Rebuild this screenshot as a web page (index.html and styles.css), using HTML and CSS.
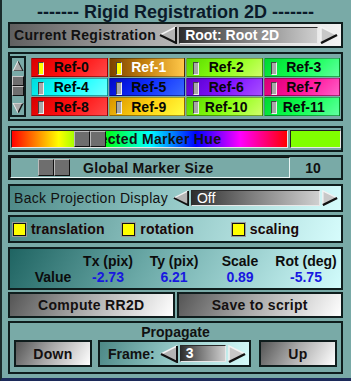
FILE: index.html
```html
<!DOCTYPE html>
<html lang="en">
<head>
    <meta charset="UTF-8">
    <title>Rigid Registration 2D</title>
    <link rel="stylesheet" href="styles.css">
</head>
<body>
<div class="window">
    <div class="title">------- Rigid Registration 2D -------</div>

    <div class="panel chooser current">
        <span class="chooser-label">Current Registration</span>
        <svg class="arrow" width="18" height="18" viewBox="0 0 18 18">
            <polygon points="17,1 1,9 17,17" fill="#b4b4b4"/>
            <polyline points="1,9 17,1" stroke="#f2f2f2" stroke-width="1.5" fill="none"/>
            <polyline points="1,9 17,17 17,1" stroke="#111" stroke-width="2" fill="none"/>
        </svg>
        <div class="field bold">Root: Root 2D</div>
        <svg class="arrow" width="18" height="18" viewBox="0 0 18 18">
            <polygon points="1,1 17,9 1,17" fill="#c8c8c8"/>
            <polyline points="1,17 1,1 17,9" stroke="#f2f2f2" stroke-width="1.5" fill="none"/>
            <polyline points="17,9 1,17" stroke="#111" stroke-width="2.5" fill="none"/>
        </svg>
    </div>

    <div class="panel markers">
        <div class="scrollbar">
            <svg width="12" height="10" viewBox="0 0 12 10">
                <polygon points="6,0 11,10 1,10" fill="#aaa"/>
                <polyline points="6,0 11,10 1,10" stroke="#111" stroke-width="1" fill="none"/>
                <polyline points="1,10 6,0" stroke="#eee" stroke-width="1" fill="none"/>
            </svg>
            <div class="sb-thumb"><span></span><span></span></div>
            <svg class="sb-down" width="12" height="10" viewBox="0 0 12 10">
                <polygon points="1,0 11,0 6,10" fill="#aaa"/>
                <polyline points="11,0 6,10" stroke="#111" stroke-width="1.5" fill="none"/>
                <polyline points="6,10 1,0 11,0" stroke="#eee" stroke-width="1" fill="none"/>
            </svg>
        </div>
        <div class="ref-grid">
            <div class="ref r0"><i class="flag on"></i>Ref-0</div>
            <div class="ref r1 picked"><i class="flag on"></i>Ref-1</div>
            <div class="ref r2"><i class="flag"></i>Ref-2</div>
            <div class="ref r3"><i class="flag"></i>Ref-3</div>
            <div class="ref r4"><i class="flag"></i>Ref-4</div>
            <div class="ref r5"><i class="flag"></i>Ref-5</div>
            <div class="ref r6"><i class="flag"></i>Ref-6</div>
            <div class="ref r7"><i class="flag"></i>Ref-7</div>
            <div class="ref r8"><i class="flag"></i>Ref-8</div>
            <div class="ref r9"><i class="flag"></i>Ref-9</div>
            <div class="ref r10"><i class="flag"></i>Ref-10</div>
            <div class="ref r11"><i class="flag"></i>Ref-11</div>
        </div>
    </div>

    <div class="panel hue-panel">
        <div class="hue-bar">
            <span class="hue-text">Selected Marker Hue</span>
            <div class="knob hue-knob"><span></span><span></span></div>
        </div>
        <div class="swatch"></div>
    </div>

    <div class="panel size-panel">
        <div class="size-track">
            <div class="knob"><span></span><span></span></div>
            <span class="size-label">Global Marker Size</span>
        </div>
        <div class="size-value">10</div>
    </div>

    <div class="panel chooser backproj shaded">
        <span class="chooser-label light">Back Projection Display</span>
        <svg class="arrow" width="16" height="16" viewBox="0 0 18 18">
            <polygon points="17,1 1,9 17,17" fill="#b4b4b4"/>
            <polyline points="1,9 17,1" stroke="#f2f2f2" stroke-width="1.5" fill="none"/>
            <polyline points="1,9 17,17 17,1" stroke="#111" stroke-width="2" fill="none"/>
        </svg>
        <div class="field">Off</div>
        <svg class="arrow" width="16" height="16" viewBox="0 0 18 18">
            <polygon points="1,1 17,9 1,17" fill="#c8c8c8"/>
            <polyline points="1,17 1,1 17,9" stroke="#f2f2f2" stroke-width="1.5" fill="none"/>
            <polyline points="17,9 1,17" stroke="#111" stroke-width="2.5" fill="none"/>
        </svg>
    </div>

    <div class="panel checks shaded">
        <label class="check"><i class="box"></i>translation</label>
        <label class="check"><i class="box"></i>rotation</label>
        <label class="check"><i class="box"></i>scaling</label>
    </div>

    <div class="panel values shaded">
        <span></span>
        <span>Tx (pix)</span>
        <span>Ty (pix)</span>
        <span>Scale</span>
        <span>Rot (deg)</span>
        <span>Value</span>
        <span class="num">-2.73</span>
        <span class="num">6.21</span>
        <span class="num">0.89</span>
        <span class="num">-5.75</span>
    </div>

    <div class="actions">
        <button class="btn">Compute RR2D</button>
        <button class="btn">Save to script</button>
    </div>

    <div class="panel propagate">
        <div class="prop-title">Propagate</div>
        <div class="prop-row">
            <button class="btn small">Down</button>
            <div class="frame shaded">
                <span class="frame-label">Frame:</span>
                <svg class="arrow" width="18" height="18" viewBox="0 0 18 18">
                    <polygon points="17,1 1,9 17,17" fill="#b4b4b4"/>
                    <polyline points="1,9 17,1" stroke="#f2f2f2" stroke-width="1.5" fill="none"/>
                    <polyline points="1,9 17,17 17,1" stroke="#111" stroke-width="2" fill="none"/>
                </svg>
                <div class="field bold frame-field">3</div>
                <svg class="arrow" width="18" height="18" viewBox="0 0 18 18">
                    <polygon points="1,1 17,9 1,17" fill="#c8c8c8"/>
                    <polyline points="1,17 1,1 17,9" stroke="#f2f2f2" stroke-width="1.5" fill="none"/>
                    <polyline points="17,9 1,17" stroke="#111" stroke-width="2.5" fill="none"/>
                </svg>
            </div>
            <button class="btn small">Up</button>
        </div>
    </div>
</div>
</body>
</html>
```

FILE: styles.css
```css
body {
    margin: 0;
    font-family: "Liberation Sans", Arial, sans-serif;
    background: #79aaa7;
}
.window {
    width: 351px;
    height: 381px;
    box-sizing: border-box;
    background: #79aaa7;
    border-left: 2px solid #1b2b2b;
    border-bottom: 3px solid #1c2a5a;
    padding: 0 8px 0 6px;
    display: flex;
    flex-direction: column;
    color: #111;
}
.title {
    height: 22px;
    line-height: 24px;
    text-align: center;
    font-size: 18px;
    font-weight: bold;
    color: #0b1a2a;
}
.panel {
    box-sizing: border-box;
    border: 2px solid #0f1d1d;
    background: #79aaa7;
}
.shaded {
    background: linear-gradient(110deg, #4c8886 0%, #8fc4c2 45%, #d6fcfc 100%);
}

/* chooser rows */
.chooser {
    display: flex;
    align-items: center;
    padding: 0 1px 0 4px;
}
.current {
    height: 26px;
    background: linear-gradient(100deg, #5e5e5e 0%, #a8a8a8 40%, #f4f4f4 100%);
}
.chooser-label {
    font-size: 14px;
    font-weight: bold;
    letter-spacing: 0.3px;
    white-space: nowrap;
}
.chooser-label.light {
    font-weight: normal;
    letter-spacing: 0.3px;
}
.arrow {
    flex: none;
    margin: 0 2px;
}
.field {
    flex: 1;
    height: 17px;
    box-sizing: border-box;
    border-top: 1px solid #2a2a2a;
    border-left: 1px solid #2a2a2a;
    border-right: 1px solid #e8e8e8;
    border-bottom: 1px solid #e8e8e8;
    background: linear-gradient(90deg, #2e2e2e 0%, #7a7a7a 45%, #cfcfcf 100%);
    color: #fff;
    font-size: 14px;
    line-height: 15px;
    padding-left: 5px;
}
.field.bold {
    font-weight: bold;
}
.current .chooser-label {
    margin-right: 1px;
}

/* marker grid */
.markers {
    margin-top: 4px;
    height: 69px;
    display: flex;
    align-items: stretch;
    padding: 2px 1px 2px 0;
    gap: 5px;
}
.scrollbar {
    width: 16px;
    box-sizing: border-box;
    border: 2px solid #0f1d1d;
    display: flex;
    flex-direction: column;
    align-items: center;
    padding-top: 3px;
}
.sb-thumb {
    margin-top: 5px;
    display: flex;
    flex-direction: column;
}
.sb-thumb span {
    width: 10px;
    height: 8px;
    background: #6f6f6f;
    border: 1px solid #111;
    border-top-color: #ccc;
    border-left-color: #ccc;
}
.sb-down {
    margin-top: auto;
    margin-bottom: 2px;
}
.ref-grid {
    flex: 1;
    display: grid;
    grid-template-columns: repeat(4, 1fr);
    grid-template-rows: repeat(3, 1fr);
    gap: 1px;
    padding: 2px 0 1px;
}
.ref {
    position: relative;
    box-sizing: border-box;
    border: 1px solid rgba(0, 0, 0, 0.35);
    display: flex;
    align-items: center;
    justify-content: center;
    font-size: 14px;
    font-weight: bold;
    color: #080808;
    padding-left: 4px;
}
.flag {
    position: absolute;
    left: 6px;
    top: 3px;
    width: 4px;
    height: 11px;
    background: #a8a8a8;
    border: 1px solid #444;
    border-right-color: #eee;
    border-bottom-color: #eee;
}
.flag.on {
    background: #ffff00;
}
.picked {
    color: #fff;
}
.r0, .r8 { background: linear-gradient(135deg, #d80000, #ff1010 50%, #ff4a4a); }
.r1 { background: linear-gradient(90deg, #7a4200, #c88410 50%, #ffc84a); }
.r2, .r10 { background: linear-gradient(135deg, #58d800, #88ff10 50%, #d0ff6a); }
.r3, .r11 { background: linear-gradient(135deg, #00d830, #10ff50 50%, #60ffa0); }
.r4 { background: linear-gradient(135deg, #00dcdc, #10ffff 50%, #70ffff); }
.r5 { background: linear-gradient(135deg, #0008c8, #1030ff 50%, #3a6aff); }
.r6 { background: linear-gradient(135deg, #5800c8, #8010ff 50%, #a850ff); }
.r7 { background: linear-gradient(135deg, #d80078, #ff1098 50%, #ff60c8); }
.r9 { background: linear-gradient(135deg, #d89400, #ffd010 50%, #ffff40); }

/* hue slider */
.hue-panel {
    margin-top: 5px;
    height: 26px;
    display: flex;
    align-items: center;
    padding: 0 0 0 1px;
    gap: 2px;
}
.hue-bar {
    position: relative;
    width: 277px;
    height: 18px;
    box-sizing: border-box;
    border: 1px solid #e8e8e8;
    border-top-color: #222;
    border-left-color: #222;
    background: linear-gradient(90deg, #ff0000, #ffff00 17%, #00ff00 33%, #00ffff 50%, #0000ff 67%, #ff00ff 83%, #ff0000);
    display: flex;
    align-items: center;
    justify-content: center;
    overflow: hidden;
}
.hue-text {
    font-size: 14px;
    font-weight: bold;
    color: #111;
    letter-spacing: 0.3px;
}
.knob {
    display: flex;
    height: 16px;
}
.knob span {
    width: 14px;
    background: #6e6e6e;
    border: 1px solid #111;
    border-top-color: #bbb;
    border-left-color: #bbb;
}
.hue-knob {
    position: absolute;
    left: 62px;
    top: 0;
}
.swatch {
    flex: 1;
    height: 18px;
    box-sizing: border-box;
    border: 1px solid #e8e8e8;
    border-top-color: #222;
    border-left-color: #222;
    background: #80ff00;
}

/* size slider */
.size-panel {
    margin-top: 3px;
    height: 25px;
    display: flex;
    align-items: center;
}
.size-track {
    width: 280px;
    height: 21px;
    box-sizing: border-box;
    border: 1px solid #e8f4f4;
    border-top-color: #111;
    border-left-color: #111;
    display: flex;
    align-items: center;
    padding-left: 27px;
}
.size-track .knob {
    height: 17px;
}
.size-label {
    margin-left: 13px;
    font-size: 14px;
    font-weight: bold;
    letter-spacing: 0.3px;
}
.size-value {
    flex: 1;
    text-align: center;
    font-size: 14px;
    font-weight: bold;
    padding-right: 5px;
}

/* back projection */
.backproj {
    margin-top: 4px;
    height: 28px;
    padding-left: 4px;
}
.backproj .chooser-label {
    margin-right: 3px;
}
.backproj .field {
    font-size: 14px;
    height: 16px;
}

/* checkboxes */
.checks {
    margin-top: 3px;
    height: 28px;
    display: flex;
    align-items: center;
    padding-left: 3px;
}
.check {
    display: flex;
    align-items: center;
    gap: 5px;
    width: 110px;
    font-size: 14px;
    font-weight: bold;
    color: #1a0808;
    letter-spacing: 0.2px;
}
.box {
    width: 11px;
    height: 11px;
    background: #ffff00;
    border: 1px solid #111;
    outline: 1px solid #999;
}

/* values */
.values {
    margin-top: 4px;
    height: 43px;
    display: grid;
    grid-template-columns: 44px repeat(4, 66px);
    grid-template-rows: 16px 16px;
    align-content: center;
    padding-left: 21px;
    background: linear-gradient(120deg, #1f6462 0%, #6aa8a6 40%, #d2fcfc 100%);
    font-size: 14px;
    font-weight: bold;
    text-align: center;
    color: #0c0c0c;
}
.values .num {
    color: #1818e0;
}

/* buttons */
.actions {
    margin-top: 2px;
    height: 26px;
    display: flex;
    gap: 2px;
}
.btn {
    flex: 1;
    box-sizing: border-box;
    border: 2px solid #0f1d1d;
    background: linear-gradient(120deg, #555 0%, #a9a9a9 45%, #fff 100%);
    font-family: "Liberation Sans", Arial, sans-serif;
    font-size: 14px;
    font-weight: bold;
    letter-spacing: 0.3px;
    color: #141010;
    padding: 0;
}

/* propagate */
.propagate {
    margin-top: 3px;
    height: 53px;
    padding: 0 4px;
}
.prop-title {
    text-align: center;
    font-size: 14px;
    font-weight: bold;
    height: 17px;
    line-height: 18px;
}
.prop-row {
    display: flex;
    align-items: center;
    gap: 6px;
    height: 27px;
}
.btn.small {
    flex: none;
    width: 78px;
    height: 27px;
}
.prop-row .btn.small:last-child {
    margin-left: 2px;
}
.frame {
    width: 154px;
    height: 27px;
    box-sizing: border-box;
    border: 2px solid #0f1d1d;
    display: flex;
    align-items: center;
    padding-left: 8px;
}
.frame-label {
    font-size: 14px;
    font-weight: bold;
    margin-right: 3px;
}
.frame-field {
    flex: none;
    width: 46px;
}
```
